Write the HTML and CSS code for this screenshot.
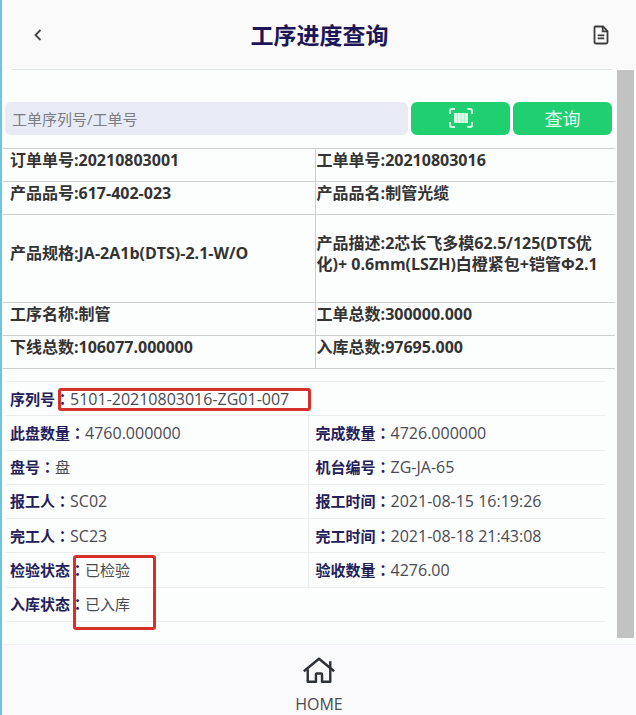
FILE: index.html
```html
<!DOCTYPE html>
<html lang="zh-CN">
<head>
    <meta charset="UTF-8">
    <meta name="viewport" content="width=device-width, initial-scale=1.0">
    <title>工序进度查询</title>
    <link rel="stylesheet" href="styles.css">
</head>
<body>
    <header class="topbar">
        <a href="#" class="back" aria-label="返回">
            <svg width="8" height="12" viewBox="0 0 8 12"><path d="M6.5 1L1.5 6L6.5 11" fill="none" stroke="#444" stroke-width="1.8"/></svg>
        </a>
        <h1>工序进度查询</h1>
        <a href="#" class="doc" aria-label="报表">
            <svg width="16" height="20" viewBox="0 0 16 20" fill="none" stroke="#3c3c3c" stroke-width="1.8">
                <path d="M2.5 1.5H10L14.5 6V17Q14.5 18.5 13 18.5H3Q1.5 18.5 1.5 17V2.5Q1.5 1.5 2.5 1.5Z"/>
                <path d="M9.7 1.5V6.3H14.5M4.7 10.3H11.3M4.7 13.3H11.3"/>
            </svg>
        </a>
    </header>

    <div class="page">
        <main>
            <form class="search">
                <input type="text" class="searchInput" placeholder="工单序列号/工单号" aria-label="工单序列号/工单号">
                <button type="button" class="btn" aria-label="扫码">
                    <svg width="24" height="20" viewBox="0 0 24 20">
                        <path d="M1 6V3Q1 1 3 1H6M18 1H21Q23 1 23 3V6M23 14V17Q23 19 21 19H18M6 19H3Q1 19 1 17V14" fill="none" stroke="#d8ffe6" stroke-width="2"/>
                        <path d="M5 5H19V15H5Z" fill="#d8ffe6"/>
                        <path d="M8.5 5V15M12 5V15M15.5 5V15" stroke="#b4f3cd" stroke-width="1"/>
                    </svg>
                </button>
                <button type="button" class="btn">查询</button>
            </form>

            <table class="summary">
                <tr>
                    <td>订单单号:20210803001</td>
                    <td>工单单号:20210803016</td>
                </tr>
                <tr>
                    <td>产品品号:617-402-023</td>
                    <td>产品品名:制管光缆</td>
                </tr>
                <tr class="tall">
                    <td>产品规格:JA-2A1b(DTS)-2.1-W/O</td>
                    <td>产品描述:2芯长飞多模62.5/125(DTS优化)+ 0.6mm(LSZH)白橙紧包+铠管Φ2.1</td>
                </tr>
                <tr>
                    <td>工序名称:制管</td>
                    <td>工单总数:300000.000</td>
                </tr>
                <tr>
                    <td>下线总数:106077.000000</td>
                    <td>入库总数:97695.000</td>
                </tr>
            </table>

            <table class="detail">
                <colgroup>
                    <col class="colLeft">
                    <col>
                </colgroup>
                <tr>
                    <td colspan="2"><b>序列号</b><span class="mark markSerial"><b class="colon">：</b>5101-20210803016-ZG01-007</span></td>
                </tr>
                <tr>
                    <td><b>此盘数量</b><b class="colon">：</b>4760.000000</td>
                    <td><b>完成数量</b><b class="colon">：</b>4726.000000</td>
                </tr>
                <tr>
                    <td><b>盘号</b><b class="colon">：</b><span class="cn">盘</span></td>
                    <td><b>机台编号</b><b class="colon">：</b>ZG-JA-65</td>
                </tr>
                <tr>
                    <td><b>报工人</b><b class="colon">：</b>SC02</td>
                    <td><b>报工时间</b><b class="colon">：</b>2021-08-15 16:19:26</td>
                </tr>
                <tr>
                    <td><b>完工人</b><b class="colon">：</b>SC23</td>
                    <td><b>完工时间</b><b class="colon">：</b>2021-08-18 21:43:08</td>
                </tr>
                <tr>
                    <td><b>检验状态</b><span class="mark markStatus"><b class="colon">：</b><span class="cn">已检验</span></span></td>
                    <td><b>验收数量</b><b class="colon">：</b>4276.00</td>
                </tr>
                <tr>
                    <td colspan="2"><b>入库状态</b><b class="colon">：</b><span class="cn">已入库</span></td>
                </tr>
            </table>
        </main>
        <div class="scrollbar"></div>
    </div>

    <footer class="tabbar">
        <a href="#" class="home">
            <svg width="38" height="30" viewBox="0 0 38 30" fill="none" stroke="#2e3238" stroke-width="2.8" stroke-linejoin="round">
                <path d="M1.5 16.5L19 2L36.5 16.5"/>
                <path d="M6 14V28.5H15.5V20Q15.5 19 16.5 19H21.5Q22.5 19 22.5 20V28.5H32V5"/>
            </svg>
            <span>HOME</span>
        </a>
    </footer>
</body>
</html>
```

FILE: styles.css
```css
*, *::after{
    box-sizing: border-box;
    font-family: "Open Sans", "Noto Sans CJK SC", sans-serif;
}
body{
    margin: 0;
    min-height: 100vh;
    display: flex;
    flex-direction: column;
    border-left: solid 2px #6fc6db;
    background-color: #fcfdfd;
    font-size: 16px;
    color: #333;
}
a{
    color: inherit;
    text-decoration: none;
}
svg{
    display: block;
}
.topbar{
    display: flex;
    align-items: center;
    justify-content: space-between;
    height: 69px;
    padding: 0 27px 0 32px;
    background-color: #fafafb;
}
.back{
    width: 12px;
}
h1{
    margin: 0;
    font-size: 23px;
    line-height: 32px;
    color: #1c1657;
}
.page{
    flex: 1;
    display: flex;
}
main{
    flex: 1;
    padding: 0 2px 0 1px;
}
main::before{
    content: "";
    display: block;
    height: 1px;
    margin: 0 3px 32px 9px;
    background-color: #e4e6e6;
}
.scrollbar{
    width: 17px;
    margin: 1px 2px 6px 0;
    background-color: #c2c2c2;
}
.search{
    display: flex;
    gap: 3px;
    margin: 0 3px 13px 2px;
}
.searchInput{
    flex: 1;
    min-width: 0;
    height: 33px;
    padding: 0 7px;
    border: none;
    border-radius: 6px;
    background-color: #e8ebf5;
    font-size: 15px;
}
.searchInput::placeholder{
    color: #7b7d82;
}
.btn{
    width: 99px;
    display: flex;
    align-items: center;
    justify-content: center;
    height: 33px;
    padding: 0 0 2px;
    border: none;
    border-radius: 6px;
    background-color: #1fcf70;
    color: #e9fff1;
    font-size: 18px;
}
table{
    border-collapse: collapse;
    table-layout: fixed;
}
.summary{
    width: 100%;
    font-weight: bold;
    line-height: 21px;
    margin-bottom: 12px;
}
.summary td{
    height: 33px;
    padding: 0 8px 10px 7px;
    border-top: solid 1px #cdd0d0;
    border-bottom: solid 1px #cdd0d0;
}
.summary td:first-child{
    width: 51%;
}
.summary td + td{
    padding-left: 1px;
    border-left: solid 1px #cdd0d0;
}
.summary .tall td{
    height: 88px;
}
.detail{
    width: calc(100% - 12px);
    height: 241px;
    margin-left: 2px;
    line-height: 22px;
    color: #4a4a52;
}
.colLeft{
    width: 50.5%;
}
.detail td{
    padding: 0 0 0 5px;
    border-top: solid 1px #eceeee;
    border-bottom: solid 1px #eceeee;
}
.detail td + td{
    padding-left: 7px;
    border-left: solid 1px #eceeee;
}
.detail b{
    font-size: 15px;
    color: #24205a;
}
/* TC glyph keeps the colon in the middle of its cell */
.detail .colon{
    font-family: "Noto Sans CJK TC", sans-serif;
    font-feature-settings: "locl" 0;
}
.cn{
    font-size: 15px;
}
/* red highlight frames */
.mark{
    position: relative;
}
.mark::after{
    content: "";
    position: absolute;
    border: solid 3px #d5302a;
    border-radius: 3px;
}
.markSerial::after{
    inset: 0 -22px -1px 3px;
}
.markStatus::after{
    top: -4px;
    left: 3px;
    width: 83px;
    height: 75px;
}
.tabbar{
    display: flex;
    justify-content: center;
    height: 71px;
    padding-top: 12px;
    border-top: solid 1px #f1f1f3;
    background-color: #fafafc;
}
.home{
    display: flex;
    flex-direction: column;
    align-items: center;
    gap: 10px;
    color: #4a4a4a;
    line-height: 22px;
}
```
